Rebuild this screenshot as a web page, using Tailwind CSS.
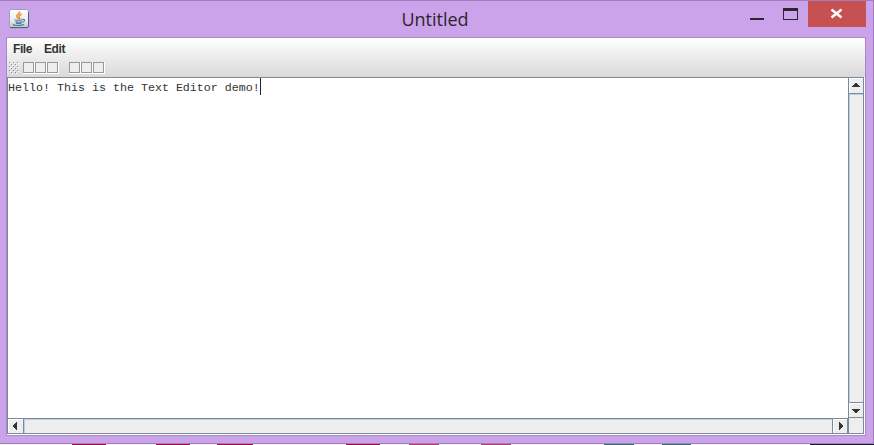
<!DOCTYPE html>
<html lang="en">
<head>
<meta charset="utf-8">
<title>Untitled</title>
<script src="https://cdn.jsdelivr.net/npm/@tailwindcss/browser@4"></script>
</head>
<body class="w-[874px] h-[445px] overflow-hidden bg-[#f5eef8] flex flex-col">
<main class="h-[444px] w-full bg-[#cba3eb] border-y border-r border-[#a17dbd] flex flex-col shrink-0">
  <header class="h-[36px] flex shrink-0 relative">
    <svg class="ml-[9px] mt-[8px]" width="20" height="20" viewBox="0 0 20 20">
      <defs><linearGradient id="g" x2="0" y2="1"><stop stop-color="#fff"/><stop offset=".6" stop-color="#e9edf0"/><stop offset="1" stop-color="#b5c1ca"/></linearGradient></defs>
      <rect x=".5" y=".5" width="19" height="18.500" rx="2" fill="url(#g)" stroke="#9da0b4"/>
      <path d="M1 18.500h18M19.500 3v15" stroke="#4e6478" fill="none"/>
      <path d="M10.500 2.500c1 2-3.500 3-2.700 5 .4 1 1.500 1.500 1.500 2.700M12.500 5c-2 1-3 2-2.200 3 .8.800.6 1.500-.3 2.300" fill="none" stroke="#ee8a32" stroke-width="1.500"/>
      <path d="M6 10.500c-1 1 7 1 7.500 0M6.500 12.500c1 1 5 1 6.500 0M7 14c1 .8 4 .8 5.500 0M4.500 15c-2 2 9 2 10.500.2M13.500 10.500c3-.7 2.500 2.200-.3 2.800" fill="none" stroke="#527b9f" stroke-width="1.100"/>
    </svg>
    <h1 class="absolute left-0 w-[870px] top-[5px] text-center text-[18px] leading-[26px] font-['Open_Sans',sans-serif] text-[#2b2530]">Untitled</h1>
    <div class="ml-auto flex mr-[7px]">
      <svg width="58" height="26" viewBox="750 1 58 26" shape-rendering="crispEdges"><path d="M750 18h14v2h-14zM783 8h15v12h-15zM784 11v8h13v-8z" fill="#2b2530" fill-rule="evenodd"/></svg>
      <div class="w-[58px] h-[26px] bg-[#c75050]"><svg width="58" height="26" viewBox="808 1 58 26"><path d="M831.500 9.500l10 8M841.500 9.500l-10 8" stroke="#fff" stroke-width="2.400"/></svg></div>
    </div>
  </header>
  <section class="ml-[6px] w-[860px] h-[399px] border border-[#aa88c4] flex flex-col shrink-0 font-['Liberation_Sans',sans-serif]">
    <div class="h-[39px] bg-linear-to-b from-white to-[#dadada] border-b border-[#dadada] flex flex-col shrink-0">
      <nav class="h-[22px] flex pl-[6px] pt-[3px] gap-[12px] text-[12px] leading-[16px] font-bold text-[#333]"><span class="w-[19px] tracking-[-0.4px]">File</span><span class="tracking-[-0.4px]">Edit</span></nav>
      <div class="flex pl-[2px] pt-[2px]">
        <svg width="12" height="13" shape-rendering="crispEdges"><defs><pattern id="d" width="4" height="4" patternUnits="userSpaceOnUse"><path d="M0 0h1v1h-1zM2 2h1v1h-1z" fill="#7c8790"/><path d="M1 1h1v1h-1zM3 3h1v1h-1z" fill="#fff"/></pattern></defs><rect width="10" height="12" fill="url(#d)"/></svg>
        <div class="flex ml-[2px]">
          <i class="w-[12px] h-[12px] border-r border-b border-white"><b class="block w-[11px] h-[11px] border border-[#999] bg-[#eee]"></b></i>
          <i class="w-[12px] h-[12px] border-r border-b border-white"><b class="block w-[11px] h-[11px] border border-[#999] bg-[#eee]"></b></i>
          <i class="w-[12px] h-[12px] border-r border-b border-white"><b class="block w-[11px] h-[11px] border border-[#999] bg-[#eee]"></b></i>
        </div>
        <div class="flex ml-[10px]">
          <i class="w-[12px] h-[12px] border-r border-b border-white"><b class="block w-[11px] h-[11px] border border-[#999] bg-[#eee]"></b></i>
          <i class="w-[12px] h-[12px] border-r border-b border-white"><b class="block w-[11px] h-[11px] border border-[#999] bg-[#eee]"></b></i>
          <i class="w-[12px] h-[12px] border-r border-b border-white"><b class="block w-[11px] h-[11px] border border-[#999] bg-[#eee]"></b></i>
        </div>
      </div>
    </div>
    <div class="h-[358px] border-r border-b border-white">
      <div class="h-[357px] w-[857px] border border-[#7a8a99] flex bg-[#eee]">
        <div class="w-[840px] flex flex-col shrink-0">
          <div class="h-[340px] bg-white flex items-start">
            <p class="w-[252px] h-[17px] whitespace-pre font-['Liberation_Mono',monospace] text-[11.667px] leading-[20px] text-[#333]">Hello! This is the Text Editor demo!</p>
            <span class="w-px h-[17px] bg-[#222]"></span>
          </div>
          <div class="h-[15px] border-t border-[#7a8a99] flex">
            <div class="w-[16px] border-r border-[#7a8a99] bg-[#eee]"><div class="h-[14px] w-[15px] border-l border-t border-white"><svg width="14" height="13" shape-rendering="crispEdges"><path d="M4 5h1V4h1V3h1V2h1v8H7V9H6V8H5V7H4z" fill="#333"/></svg></div></div>
            <div class="grow border-t border-l border-[#b8cfe5]"></div>
            <div class="w-[16px] border-x border-[#7a8a99]"><div class="h-[14px] w-[14px] border-l border-t border-white"><svg width="13" height="13" shape-rendering="crispEdges"><path d="M5 2h1v1h1v1h1v1h1v2H8v1H7v1H6v1H5z" fill="#333"/></svg></div></div>
          </div>
        </div>
        <div class="w-[15px] border-l border-[#7a8a99] flex flex-col shrink-0">
          <div class="h-[16px] border-b border-[#7a8a99]"><div class="h-[15px] border-l border-t border-white"><svg width="13" height="14" shape-rendering="crispEdges"><path d="M5 4h2v1h1v1h1v1h1v1H2V7h1V6h1V5h1z" fill="#333"/></svg></div></div>
          <div class="h-[309px] border-l border-t border-[#b8cfe5] border-b border-b-[#7a8a99]"></div>
          <div class="h-[15px] border-b border-[#7a8a99]"><div class="h-[14px] border-l border-t border-white"><svg width="13" height="13" shape-rendering="crispEdges"><path d="M2 5h8v1H9v1H8v1H7v1H5V8H4V7H3V6H2z" fill="#333"/></svg></div></div>
        </div>
      </div>
    </div>
  </section>
</main>
<svg class="shrink-0 block" width="874" height="1" shape-rendering="crispEdges"><path d="M72 0h34v1H72zM156 0h34v1h-34zM217 0h36v1h-36zM346 0h34v1h-34z" fill="#a60c43"/><path d="M409 0h30v1h-30zM481 0h30v1h-30z" fill="#b93b67"/><path d="M604 0h30v1h-30zM662 0h29v1h-29z" fill="#3b706c"/><path d="M810 0h64v1h-64z" fill="#191820"/></svg>
</body>
</html>
